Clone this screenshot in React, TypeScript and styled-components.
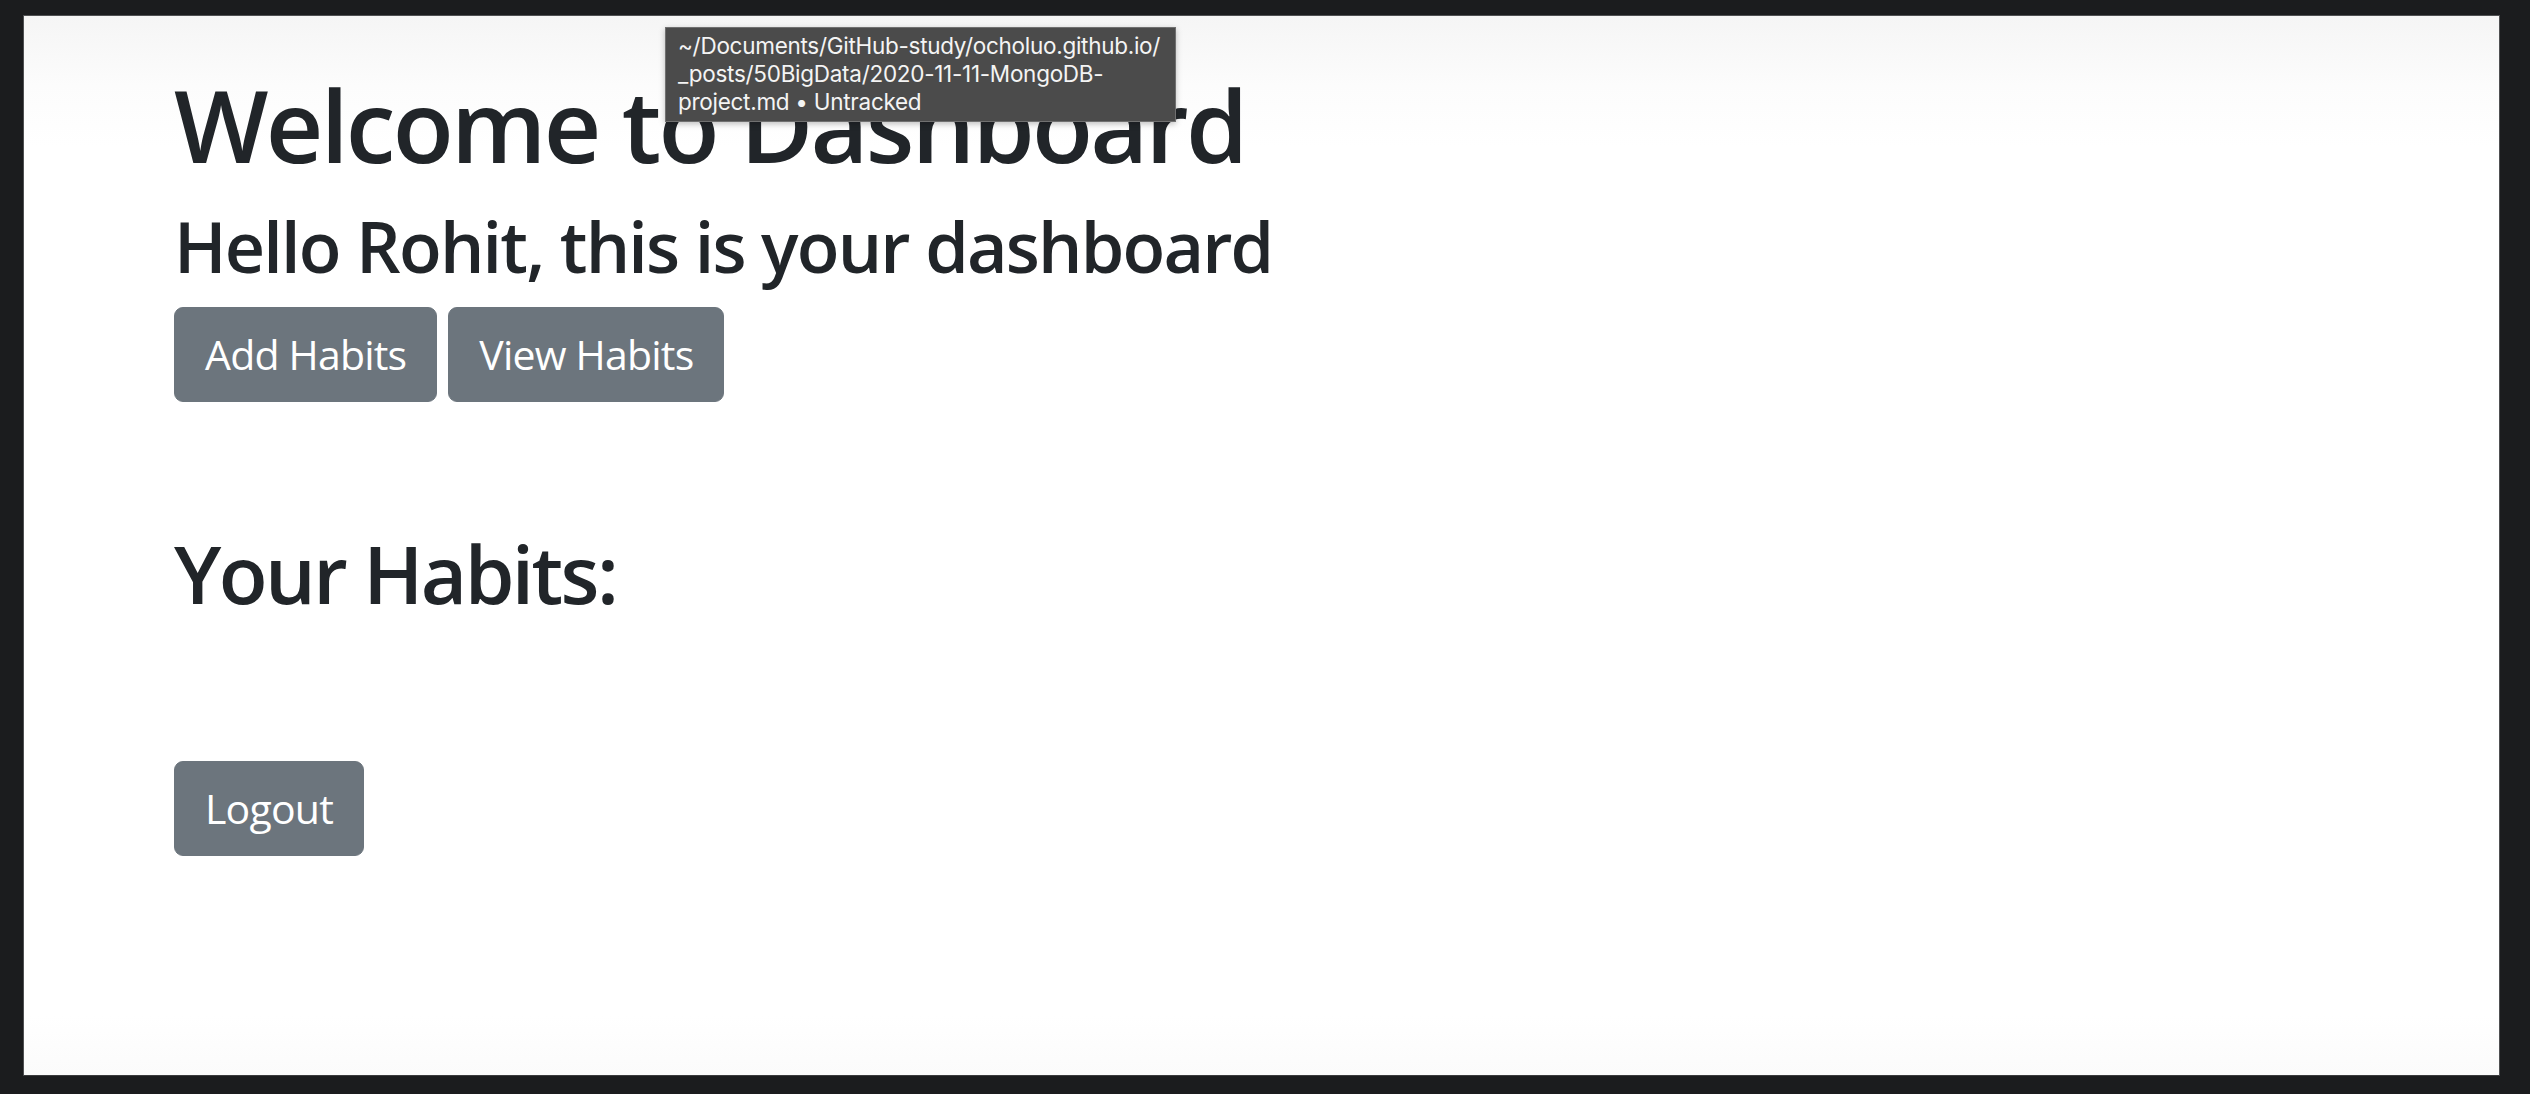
import React from 'react'
import styled, { createGlobalStyle } from 'styled-components'

const GlobalStyle = createGlobalStyle`
  html, body {
    margin: 0;
    padding: 0;
    background: #1b1c1e;
  }
  body {
    font-family: 'Open Sans', 'Noto Sans', sans-serif;
    color: #212529;
  }
  * {
    box-sizing: border-box;
  }
`

const Stage = styled.div`
  width: 2530px;
  height: 1094px;
  padding: 15px 0 0 23px;
  overflow: hidden;
`

const Frame = styled.div`
  position: relative;
  width: 2477px;
  height: 1061px;
  border: 1px solid #4f5052;
  border-bottom-color: #3a3b3d;
  background: linear-gradient(
    to bottom,
    #f5f5f5 0px,
    #fcfcfc 70px,
    #ffffff 130px,
    #ffffff calc(100% - 60px),
    #fbfbfb 100%
  );
`

const Content = styled.div`
  display: flex;
  flex-direction: column;
  align-items: flex-start;
  padding: 48px 0 0 150px;
`

const Title = styled.h1`
  margin: 0 0 20px;
  font-size: 100px;
  font-weight: 600;
  line-height: 1.2;
  letter-spacing: -2.75px;
`

const Greeting = styled.h3`
  margin: 0 0 19px;
  font-size: 70px;
  font-weight: 600;
  line-height: 1.2;
  letter-spacing: -1.8px;
`

const ActionRow = styled.div`
  display: flex;
  gap: 11px;
`

const ActionButton = styled.button`
  height: 95px;
  padding: 0 30px;
  border: 1px solid #6c757d;
  border-radius: 9px;
  background: #6c757d;
  color: #ffffff;
  font-family: 'Open Sans', 'Noto Sans', sans-serif;
  font-size: 41px;
  font-weight: 400;
  line-height: 1.5;
  letter-spacing: -0.8px;
  cursor: pointer;
`

const SectionTitle = styled.h2`
  margin: 123px 0 0;
  font-size: 80px;
  font-weight: 600;
  line-height: 1.2;
  letter-spacing: -2.6px;
`

const HabitList = styled.ul`
  margin: 0;
  padding: 0;
  list-style: none;
  height: 140px;
`

const Tooltip = styled.div`
  position: absolute;
  left: 641px;
  top: 11px;
  width: 511px;
  height: 95px;
  padding: 4px 12px 0;
  background: #4b4b4b;
  border: 1px solid #707070;
  color: #f4f4f4;
  font-family: Inter, 'Liberation Sans', sans-serif;
  font-size: 22.5px;
  line-height: 28px;
  letter-spacing: -0.28px;
  box-shadow: 0 2px 6px rgba(0, 0, 0, 0.25);
`

const TooltipLine = styled.span`
  display: block;
  white-space: nowrap;
`

const App: React.FC = () => {
  const tooltipLines = [
    '~/Documents/GitHub-study/ocholuo.github.io/',
    '_posts/50BigData/2020-11-11-MongoDB-',
    'project.md • Untracked',
  ]

  return (
    <>
      <GlobalStyle />
      <Stage>
        <Frame>
          <Content>
            <Title>Welcome to Dashboard</Title>
            <Greeting>Hello Rohit, this is your dashboard</Greeting>
            <ActionRow>
              <ActionButton>Add Habits</ActionButton>
              <ActionButton>View Habits</ActionButton>
            </ActionRow>
            <SectionTitle>Your Habits:</SectionTitle>
            <HabitList />
            <ActionButton>Logout</ActionButton>
          </Content>
          <Tooltip>
            {tooltipLines.map((line) => (
              <TooltipLine key={line}>{line}</TooltipLine>
            ))}
          </Tooltip>
        </Frame>
      </Stage>
    </>
  )
}

export default App
